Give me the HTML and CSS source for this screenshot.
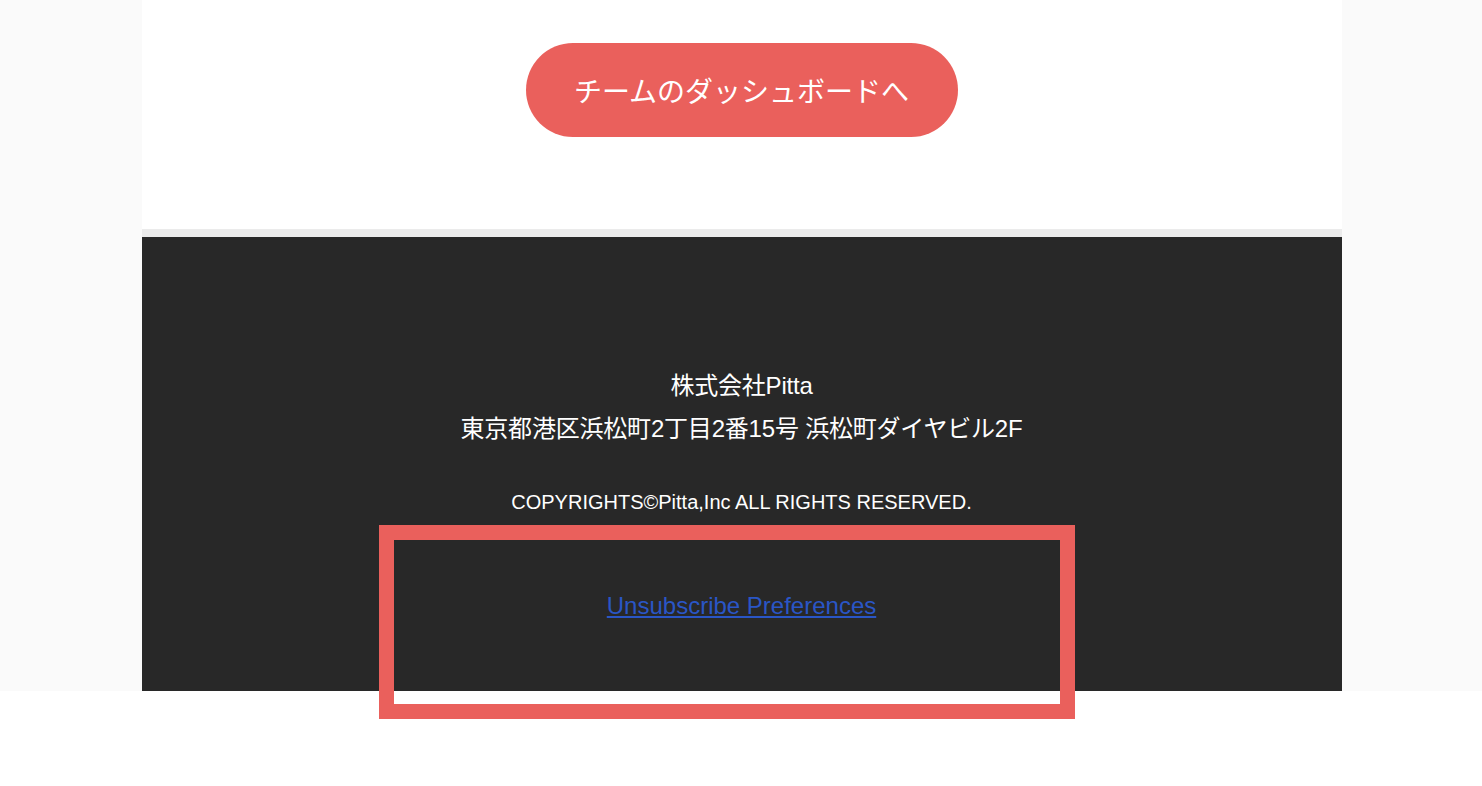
FILE: index.html
```html
<!DOCTYPE html>
<html lang="ja">
<head>
<meta charset="utf-8">
<title>Pitta</title>
<link rel="stylesheet" href="styles.css">
</head>
<body>
<div class="outer">
  <div class="container">
    <section class="hero">
      <a class="cta" href="#">チームのダッシュボードへ</a>
    </section>
    <div class="divider"></div>
    <footer class="footer">
      <p class="company">株式会社Pitta<br>東京都港区浜松町2丁目2番15号 浜松町ダイヤビル2F</p>
      <p class="copyright">COPYRIGHTS©Pitta,Inc ALL RIGHTS RESERVED.</p>
      <p class="unsub"><a href="#">Unsubscribe Preferences</a></p>
    </footer>
  </div>
</div>
<div class="highlight"></div>
</body>
</html>
```
FILE: styles.css
```css
html, body {
  margin: 0;
  padding: 0;
  background: #ffffff;
  font-family: "Liberation Sans", "Noto Sans CJK JP", sans-serif;
}
.outer {
  background: #fafafa;
  padding-left: 1px;
}
.container {
  width: 1200px;
  margin: 0 auto;
}
.hero {
  background: #ffffff;
  height: 229px;
  display: flex;
  justify-content: center;
  align-items: flex-start;
  padding-top: 43px;
  box-sizing: border-box;
}
.cta {
  display: flex;
  align-items: center;
  justify-content: center;
  width: 432px;
  height: 94px;
  border-radius: 47px;
  background: #ea605c;
  color: #ffffff;
  text-decoration: none;
  font-family: "Noto Sans CJK JP", sans-serif;
  font-size: 28px;
}
.divider {
  height: 8px;
  background: #ebebeb;
}
.footer {
  background: #282828;
  height: 454px;
  box-sizing: border-box;
  padding-top: 127px;
  color: #ffffff;
  text-align: center;
}
.footer p {
  margin: 0;
}
.company {
  font-size: 24px;
  line-height: 43px;
  letter-spacing: -0.2px;
}
.copyright {
  font-size: 20px;
  line-height: 24px;
  margin-top: 40px !important;
}
.unsub {
  font-size: 24px;
  line-height: 30px;
  margin-top: 77px !important;
}
.unsub a {
  color: #2a56c6;
  text-decoration: underline;
}
.highlight {
  position: absolute;
  left: 379px;
  top: 525px;
  width: 696px;
  height: 194px;
  border: 15px solid #ea605c;
  box-sizing: border-box;
}
```
